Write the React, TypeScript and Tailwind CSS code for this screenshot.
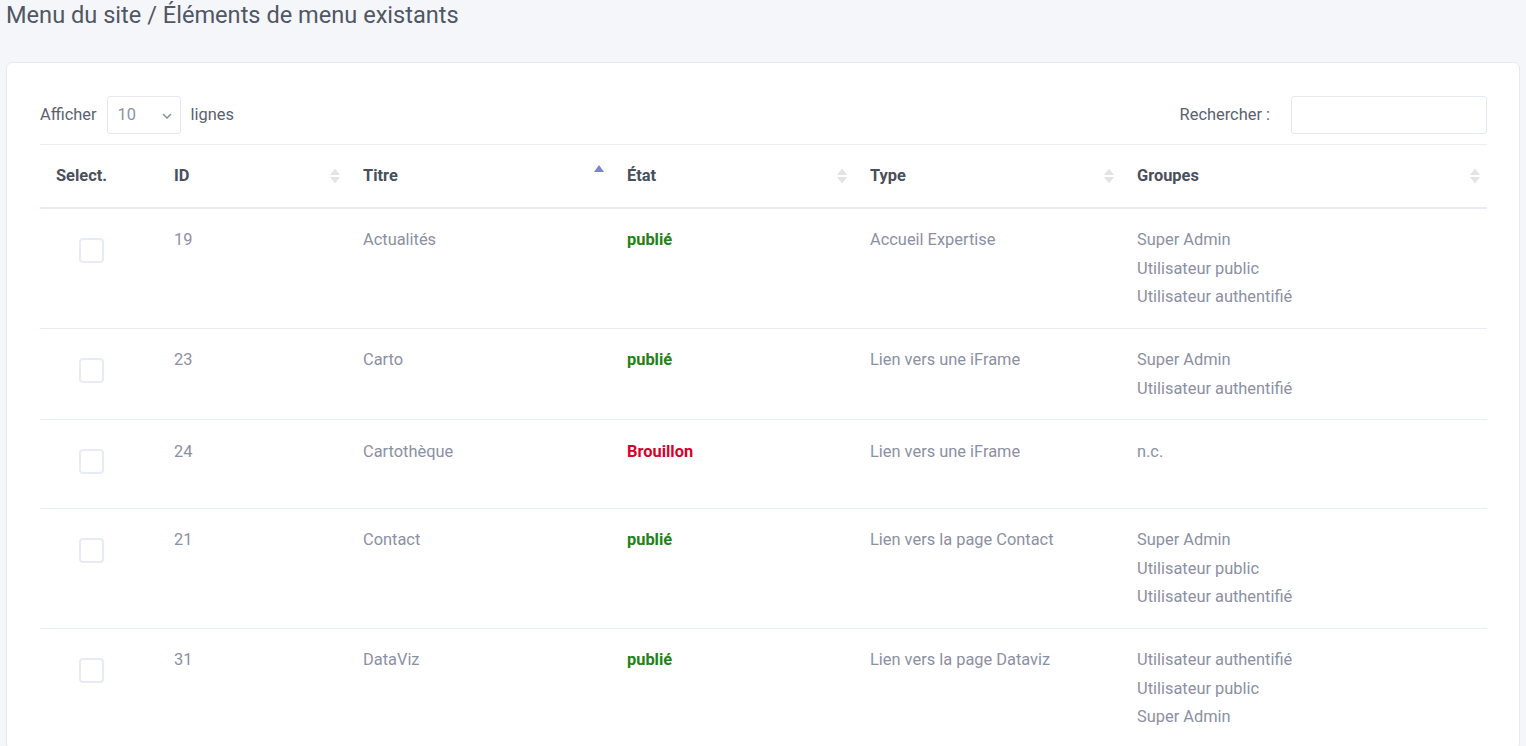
import React from 'react';

type Row = {
  id: number;
  title: string;
  published: boolean;
  type: string;
  groups: string[];
};

const rows: Row[] = [
  { id: 19, title: 'Actualités', published: true, type: 'Accueil Expertise', groups: ['Super Admin', 'Utilisateur public', 'Utilisateur authentifié'] },
  { id: 23, title: 'Carto', published: true, type: 'Lien vers une iFrame', groups: ['Super Admin', 'Utilisateur authentifié'] },
  { id: 24, title: 'Cartothèque', published: false, type: 'Lien vers une iFrame', groups: ['n.c.'] },
  { id: 21, title: 'Contact', published: true, type: 'Lien vers la page Contact', groups: ['Super Admin', 'Utilisateur public', 'Utilisateur authentifié'] },
  { id: 31, title: 'DataViz', published: true, type: 'Lien vers la page Dataviz', groups: ['Utilisateur authentifié', 'Utilisateur public', 'Super Admin'] },
];

const SortIcon = ({ active }: { active?: boolean }) => {
  if (active) {
    return (
      <svg width="10" height="15" viewBox="0 0 10 15" className="absolute right-[7px] top-[20px]">
        <path d="M5 0 L10 7 L0 7 Z" fill="#7b83d6" />
      </svg>
    );
  }
  return (
    <svg width="10" height="15" viewBox="0 0 10 15" className="absolute right-[7px] top-1/2 -translate-y-1/2">
      <path d="M5 0 L10 6.5 L0 6.5 Z" fill="#e3e4e8" />
      <path d="M0 8.5 L10 8.5 L5 15 Z" fill="#e3e4e8" />
    </svg>
  );
};

const headers = [
  { label: 'Select.', sort: false },
  { label: 'ID', sort: true },
  { label: 'Titre', sort: true, active: true },
  { label: 'État', sort: true },
  { label: 'Type', sort: true },
  { label: 'Groupes', sort: true },
];

export default function App() {
  return (
    <div className="min-h-screen bg-[#f5f6fa] font-['Roboto',sans-serif] text-[16.4px] leading-[22.5px]">
      <div className="px-[6px] pt-[1px] pb-[33px]">
        <h1 className="text-[23.6px] leading-[28px] text-[#505765] font-normal">
          Menu du site / Éléments de menu existants
        </h1>
      </div>

      <div className="mx-[6px] bg-white border border-[#e6e9f0] rounded-[6px] px-[33px] pt-[33px]">
        <div className="w-[1447px] flex items-center justify-between h-[38px] mb-[10px]">
          <div className="flex items-center gap-[10px] text-[#5b6170]">
            <span>Afficher</span>
            <div className="relative w-[74px] h-[38px] border border-[#e6e9f1] rounded-[3px] flex items-center px-[10px] text-[#8d92a6]">
              <span>10</span>
              <svg width="10" height="6" viewBox="0 0 10 6" className="absolute right-[8px] top-[16px]">
                <path d="M1 1 L5 5 L9 1" stroke="#8d92a6" strokeWidth="1.6" fill="none" />
              </svg>
            </div>
            <span>lignes</span>
          </div>
          <div className="flex items-center gap-[21px] text-[#5b6170]">
            <span>Rechercher :</span>
            <div className="w-[196px] h-[38px] border border-[#e6e9f1] rounded-[3px]" />
          </div>
        </div>

        <table className="w-[1447px] table-fixed border-collapse">
          <colgroup>
            <col className="w-[118px]" />
            <col className="w-[189px]" />
            <col className="w-[264px]" />
            <col className="w-[243px]" />
            <col className="w-[267px]" />
            <col className="w-[366px]" />
          </colgroup>
          <thead>
            <tr className="border-t border-[#eceff5] border-b-2 border-b-[#e8ecf4]">
              {headers.map((h) => (
                <th
                  key={h.label}
                  className="relative text-left font-bold text-[#4a4f5c] pt-[19.5px] pb-[19.5px] pl-[16px] pr-[24px]"
                >
                  {h.label}
                  {h.sort && <SortIcon active={h.active} />}
                </th>
              ))}
            </tr>
          </thead>
          <tbody className="text-[#8c90a4]">
            {rows.map((r) => (
              <tr key={r.id} className="border-b border-[#e8ecf4] align-top">
                <td className="pt-[20.5px] pb-[19px] pl-[39px]">
                  <div className="h-[48px] pt-[8.5px]">
                    <div className="w-[25px] h-[25px] border-2 border-[#e6ebf5] rounded-[4px]" />
                  </div>
                </td>
                <td className="pt-[20.5px] pb-[19px] pl-[16px]">{r.id}</td>
                <td className="pt-[20.5px] pb-[19px] pl-[16px]">{r.title}</td>
                <td className="pt-[20.5px] pb-[19px] pl-[16px]">
                  {r.published ? (
                    <span className="font-bold text-[#1f8316]">publié</span>
                  ) : (
                    <span className="font-bold text-[#d5022c]">Brouillon</span>
                  )}
                </td>
                <td className="pt-[20.5px] pb-[19px] pl-[16px]">{r.type}</td>
                <td className="pt-[20.5px] pb-[19px] pl-[16px]">
                  <div className="flex flex-col gap-[6px]">
                    {r.groups.map((g) => (
                      <span key={g}>{g}</span>
                    ))}
                  </div>
                </td>
              </tr>
            ))}
          </tbody>
        </table>
      </div>
    </div>
  );
}
